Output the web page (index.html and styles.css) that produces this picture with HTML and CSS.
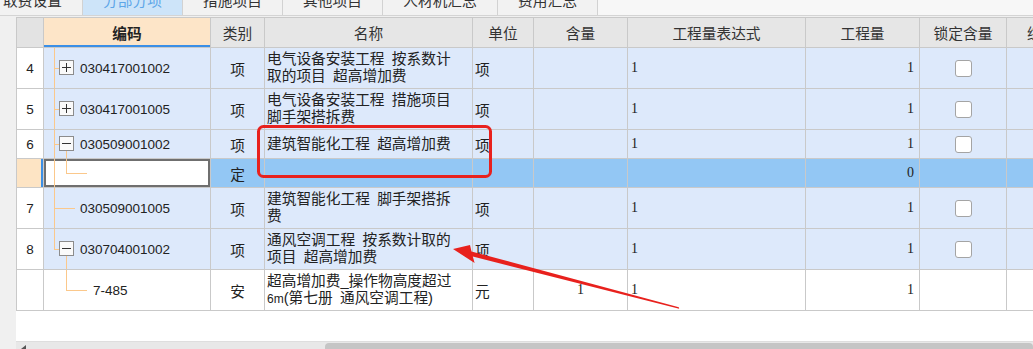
FILE: index.html
```html
<!DOCTYPE html>
<html lang="zh-CN">

<head>
  <meta charset="UTF-8" />
  <meta name="viewport" content="width=device-width, initial-scale=1.0" />
  <title>分部分项</title>
  <link rel="stylesheet" href="styles.css">
</head>

<body>
  <div class="tabs">
    <div class="tab first">取费设置</div>
    <div class="tab active">分部分项</div>
    <div class="tab">措施项目</div>
    <div class="tab">其他项目</div>
    <div class="tab wide">人材机汇总</div>
    <div class="tab">费用汇总</div>
  </div>

  <div class="main">
    <div class="side"></div>
    <div class="sheet">
      <div class="grid-area">
        <table class="grid">
          <colgroup>
            <col class="c-idx">
            <col class="c-code">
            <col class="c-type">
            <col class="c-name">
            <col class="c-unit">
            <col class="c-qty">
            <col class="c-expr">
            <col class="c-amount">
            <col class="c-lock">
            <col class="c-price">
          </colgroup>
          <thead>
            <tr class="hdr">
              <th class="idx"></th>
              <th class="code-h">编码</th>
              <th>类别</th>
              <th>名称</th>
              <th>单位</th>
              <th>含量</th>
              <th>工程量表达式</th>
              <th>工程量</th>
              <th>锁定含量</th>
              <th>综合单价</th>
            </tr>
          </thead>
          <tbody>
            <tr class="tall item">
              <td class="idx">4</td>
              <td class="code"><i class="tv"></i><i class="th"></i><b class="box plus"></b>030417001002</td>
              <td class="type">项</td>
              <td class="name">电气设备安装工程&ensp;按系数计<br>取的项目&ensp;超高增加费</td>
              <td class="unit">项</td>
              <td class="qty"></td>
              <td class="expr">1</td>
              <td class="amount">1</td>
              <td class="lock"><span class="chk"></span></td>
              <td></td>
            </tr>
            <tr class="tall item">
              <td class="idx">5</td>
              <td class="code"><i class="tv"></i><i class="th"></i><b class="box plus"></b>030417001005</td>
              <td class="type">项</td>
              <td class="name">电气设备安装工程&ensp;措施项目<br>脚手架搭拆费</td>
              <td class="unit">项</td>
              <td class="qty"></td>
              <td class="expr">1</td>
              <td class="amount">1</td>
              <td class="lock"><span class="chk"></span></td>
              <td></td>
            </tr>
            <tr class="short item">
              <td class="idx">6</td>
              <td class="code"><i class="tv"></i><i class="th"></i><b class="box"></b><i class="cv down"></i>030509001002</td>
              <td class="type">项</td>
              <td class="name">建筑智能化工程&ensp;超高增加费</td>
              <td class="unit">项</td>
              <td class="qty"></td>
              <td class="expr">1</td>
              <td class="amount">1</td>
              <td class="lock"><span class="chk"></span></td>
              <td></td>
            </tr>
            <tr class="short picked">
              <td class="idx sel"></td>
              <td class="code edit"><i class="tv"></i><i class="cv up"></i><i class="ch"></i></td>
              <td class="type">定</td>
              <td class="name"></td>
              <td class="unit"></td>
              <td class="qty"></td>
              <td class="expr"></td>
              <td class="amount">0</td>
              <td class="lock"></td>
              <td></td>
            </tr>
            <tr class="tall item">
              <td class="idx">7</td>
              <td class="code"><i class="tv"></i><i class="th long"></i>030509001005</td>
              <td class="type">项</td>
              <td class="name">建筑智能化工程&ensp;脚手架搭拆<br>费</td>
              <td class="unit">项</td>
              <td class="qty"></td>
              <td class="expr">1</td>
              <td class="amount">1</td>
              <td class="lock"><span class="chk"></span></td>
              <td></td>
            </tr>
            <tr class="tall item">
              <td class="idx">8</td>
              <td class="code"><i class="tv half"></i><i class="th"></i><b class="box"></b><i class="cv down"></i>030704001002</td>
              <td class="type">项</td>
              <td class="name">通风空调工程&ensp;按系数计取的<br>项目&ensp;超高增加费</td>
              <td class="unit">项</td>
              <td class="qty"></td>
              <td class="expr">1</td>
              <td class="amount">1</td>
              <td class="lock"><span class="chk"></span></td>
              <td></td>
            </tr>
            <tr class="tall">
              <td class="idx"></td>
              <td class="code sub"><i class="cv up"></i><i class="ch"></i>7-485</td>
              <td class="type">安</td>
              <td class="name">超高增加费_操作物高度超过<br><small>6m</small>(第七册&ensp;通风空调工程)</td>
              <td class="unit">元</td>
              <td class="qty mid">1</td>
              <td class="expr">1</td>
              <td class="amount">1</td>
              <td class="lock"></td>
              <td></td>
            </tr>
          </tbody>
        </table>
      </div>
      <div class="hscroll">
        <span class="arrow"></span>
        <span class="thumb"></span>
      </div>
    </div>
  </div>

  <!-- annotation marks drawn over the screenshot -->
  <svg class="marks" width="1033" height="349" viewBox="0 0 1033 349">
    <rect x="258.5" y="126.5" width="232" height="50" rx="5" fill="none" stroke="#e8211d" stroke-width="3" />
    <polygon fill="#e8211d"
      points="453,249 470,245 471.5,251.5 678.8,307.2 679.2,308.8 472.8,256.6 474.6,263" />
  </svg>
</body>

</html>
```

FILE: styles.css
```css
:root {
  --grid-line: #c9c9c9;
  --row-blue: #dde9fb;
  --row-picked: #93c7f4;
  --tree-line: #fbc88b;
  --text-color: #222222;
}

* {
  box-sizing: border-box;
}

body {
  margin: 0;
  width: 1033px;
  height: 349px;
  overflow: hidden;
  position: relative;
  background-color: #f0f0f0;
  font-family: "Liberation Sans", "Noto Sans CJK SC", sans-serif;
  font-size: 14.7px;
  color: var(--text-color);
}

/* top tab strip, mostly scrolled out of view */
.tabs {
  display: flex;
  height: 16px;
  background-color: #f7f7f7;
  border-bottom: 1px solid #d4d4d4;
}

.tab {
  flex: none;
  width: 100px;
  line-height: 2px;
  text-align: center;
  color: #333;
  background-color: #f2f2f2;
  border-right: 1px solid #d2d2d2;
}

.tab.first {
  margin-left: -17px;
}

.tab.wide {
  width: 115px;
}

.tab.active {
  color: #5ea6e8;
  background-color: #cde4f9;
}

.main {
  display: flex;
  height: 333px;
}

.side {
  flex: none;
  width: 16px;
}

.sheet {
  flex: 1;
  min-width: 0;
  margin-top: 1px;
  display: flex;
  flex-direction: column;
  background-color: #fff;
  overflow: hidden;
}

.grid-area {
  flex: 1;
  overflow: hidden;
}

/* grid */
.grid {
  border-collapse: collapse;
  table-layout: fixed;
  width: 1090px;
}

.c-idx { width: 27px; }
.c-code { width: 167px; }
.c-type { width: 54px; }
.c-name { width: 208px; }
.c-unit { width: 61px; }
.c-qty { width: 94px; }
.c-expr { width: 178px; }
.c-amount { width: 114px; }
.c-lock { width: 87px; }
.c-price { width: 100px; }

.grid th,
.grid td {
  border: 1px solid var(--grid-line);
  padding: 0;
  white-space: nowrap;
  overflow: hidden;
}

.hdr {
  height: 30px;
}

.grid th {
  font-weight: 400;
  color: #333;
  background-color: #e6e6e6;
  text-align: center;
}

.grid th.idx {
  background-color: #e3e3e3;
}

.grid th.code-h {
  font-weight: 700;
  color: #222;
  background-color: #fde5c8;
  box-shadow: inset 0 -2px 0 #3b8fe6;
}

.tall {
  height: 41px;
}

.short {
  height: 29px;
}

.item td {
  background-color: var(--row-blue);
}

.picked td {
  background-color: var(--row-picked);
}

.grid td.idx {
  background-color: #fff;
  text-align: center;
  font-size: 13.5px;
}

.grid td.idx.sel {
  background-color: #fde4c4;
}

.code {
  position: relative;
  padding-left: 36px !important;
  font-size: 13.5px;
}

.code.sub {
  padding-left: 49px !important;
}

.grid td.code.edit {
  background-color: #fff;
  box-shadow: inset 0 0 0 2px #6f6f6f;
  overflow: visible;
}

.code.edit::before {
  content: "";
  position: absolute;
  left: -3px;
  top: 0;
  bottom: 0;
  width: 2px;
  background-color: #3b8fe6;
}

/* tree connectors */
.tv,
.th,
.cv,
.ch {
  position: absolute;
  background-color: var(--tree-line);
}

.tv {
  left: 10px;
  top: 0;
  bottom: 0;
  width: 1px;
}

.tv.half {
  bottom: 50%;
}

.th {
  left: 10px;
  top: 50%;
  width: 5px;
  height: 1px;
}

.th.long {
  width: 21px;
}

.cv {
  left: 22px;
  width: 1px;
}

.cv.down {
  top: calc(50% + 7px);
  bottom: 0;
}

.cv.up {
  top: 0;
  height: 50%;
}

.ch {
  left: 22px;
  top: 50%;
  width: 21px;
  height: 1px;
}

.box {
  position: absolute;
  left: 15px;
  top: 50%;
  margin-top: -8px;
  width: 15px;
  height: 15px;
  border: 1px solid #8c8c8c;
  background-color: #fafafa;
}

.box::before {
  content: "";
  position: absolute;
  left: 2px;
  right: 2px;
  top: 6px;
  height: 1px;
  background-color: #333;
}

.box.plus::after {
  content: "";
  position: absolute;
  top: 2px;
  bottom: 2px;
  left: 6px;
  width: 1px;
  background-color: #333;
}

.type {
  text-align: center;
}

.name {
  padding-left: 2px !important;
  line-height: 17px;
}

.name small {
  font-size: 12px;
}

.unit {
  padding-left: 2px !important;
}

.qty.mid {
  text-align: center;
}

.expr,
.amount,
.qty {
  font-family: "Liberation Serif", serif;
  font-size: 14px;
}

.expr {
  padding-left: 3px !important;
}

.amount {
  text-align: right;
  padding-right: 5px !important;
}

.lock {
  text-align: center;
}

.chk {
  display: inline-block;
  vertical-align: middle;
  width: 17px;
  height: 17px;
  border: 1px solid #a4a4a4;
  border-radius: 3px;
  background-color: #fff;
}

/* horizontal scrollbar, cut off at the bottom */
.hscroll {
  flex: none;
  position: relative;
  height: 8px;
  background-color: #e8e8e8;
  border-top: 1px solid #dedede;
}

.arrow {
  position: absolute;
  left: 5px;
  top: 3px;
  border-style: solid;
  border-width: 4px 5px 4px 0;
  border-color: transparent #555 transparent transparent;
}

.thumb {
  position: absolute;
  left: 309px;
  right: 0;
  top: 1px;
  bottom: -10px;
  border-radius: 4px;
  background-color: #c5c5c5;
}

.marks {
  position: absolute;
  left: 0;
  top: 0;
  pointer-events: none;
}
```
